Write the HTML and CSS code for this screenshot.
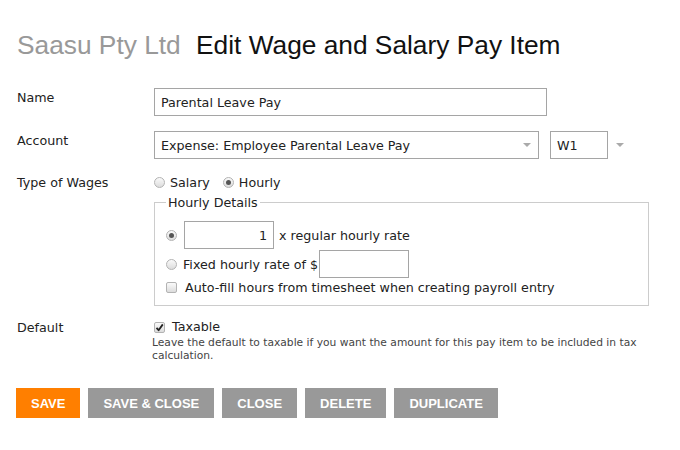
FILE: index.html
```html
<!DOCTYPE html>
<html lang="en">
<head>
    <meta charset="UTF-8">
    <title>Edit Wage and Salary Pay Item</title>
    <link rel="stylesheet" href="styles.css">
</head>
<body>
    <div class="page">
        <h1 class="title"><span class="company">Saasu Pty Ltd</span> Edit Wage and Salary Pay Item</h1>

        <div class="form">
            <div class="row row-name">
                <div class="label">Name</div>
                <div class="field">
                    <div class="input input-name">Parental Leave Pay</div>
                </div>
            </div>

            <div class="row row-account">
                <div class="label">Account</div>
                <div class="field">
                    <div class="select select-account">
                        <span>Expense: Employee Parental Leave Pay</span>
                        <span class="arrow"></span>
                    </div>
                    <div class="input input-code">W1</div>
                    <span class="arrow arrow-out"></span>
                </div>
            </div>

            <div class="row row-type">
                <div class="label">Type of Wages</div>
                <div class="field">
                    <label class="opt"><span class="radio"></span>Salary</label>
                    <label class="opt"><span class="radio checked"></span>Hourly</label>
                </div>
            </div>

            <div class="row row-hourly">
                <div class="label"></div>
                <fieldset class="details">
                    <legend>Hourly Details</legend>
                    <div class="hrow">
                        <span class="radio checked"></span>
                        <div class="input input-rate">1</div>
                        <span class="after">x regular hourly rate</span>
                    </div>
                    <div class="hrow">
                        <span class="radio"></span>
                        <span class="before">Fixed hourly rate of $</span>
                        <div class="input input-fixed"></div>
                    </div>
                    <div class="hrow hrow-check">
                        <span class="checkbox"></span>
                        <span class="before">Auto-fill hours from timesheet when creating payroll entry</span>
                    </div>
                </fieldset>
            </div>

            <div class="row row-default">
                <div class="label">Default</div>
                <div class="field field-col">
                    <label class="opt opt-tax">
                        <span class="checkbox checked">
                            <svg width="9" height="9" viewBox="0 0 9 9"><path d="M1.5 4.8 L3.6 7.2 L7.8 1.4" fill="none" stroke="#222" stroke-width="1.8" stroke-linejoin="round"/></svg>
                        </span>Taxable
                    </label>
                    <p class="help">Leave the default to taxable if you want the amount for this pay item to be included in tax calculation.</p>
                </div>
            </div>
        </div>

        <div class="actions">
            <button class="btn btn-primary">SAVE</button>
            <button class="btn">SAVE &amp; CLOSE</button>
            <button class="btn">CLOSE</button>
            <button class="btn">DELETE</button>
            <button class="btn">DUPLICATE</button>
        </div>
    </div>
</body>
</html>
```

FILE: styles.css
```css
body {
    margin: 0;
    background: #fff;
    color: #222;
    font-family: "DejaVu Sans", Verdana, sans-serif;
    font-size: 12.7px;
}
.page {
    padding: 30px 0 0 17px;
    width: 640px;
}
.title {
    margin: 0;
    font-family: "Liberation Sans", Arial, sans-serif;
    font-weight: normal;
    font-size: 26.3px;
    line-height: 30px;
    color: #111;
}
.company {
    color: #999;
    margin-right: 8px;
}
.form {
    margin-top: 28px;
}
.row {
    display: grid;
    grid-template-columns: 137px 1fr;
    align-items: start;
}
.label {
    padding-top: 2px;
    line-height: 15px;
}
.field {
    display: flex;
    align-items: center;
}
.input,
.select {
    box-sizing: border-box;
    height: 28px;
    border: 1px solid #a5a5a5;
    padding: 0 6px;
    display: flex;
    align-items: center;
    background: #fff;
}
.input-name {
    width: 393px;
}
.row-account {
    margin-top: 15px;
}
.select-account {
    width: 385px;
    justify-content: space-between;
    padding-right: 7px;
}
.input-code {
    width: 58px;
    margin-left: 11px;
}
.arrow {
    width: 0;
    height: 0;
    border-left: 4px solid transparent;
    border-right: 4px solid transparent;
    border-top: 4px solid #aaa;
}
.arrow-out {
    margin-left: 8px;
}
.row-type {
    margin-top: 16px;
}
.row-type .label {
    padding-top: 0;
}
.opt {
    display: flex;
    align-items: center;
    margin-right: 13px;
    line-height: 15px;
}
.radio {
    box-sizing: border-box;
    width: 11px;
    height: 11px;
    border-radius: 50%;
    border: 1px solid #b3b3b3;
    background: linear-gradient(#fafafa, #dcdcdc);
    margin-right: 5px;
    display: inline-flex;
    align-items: center;
    justify-content: center;
    flex: none;
}
.radio.checked::after {
    content: "";
    width: 5px;
    height: 5px;
    border-radius: 50%;
    background: #555;
}
.checkbox {
    box-sizing: border-box;
    width: 11px;
    height: 11px;
    border: 1px solid #b3b3b3;
    border-radius: 2px;
    background: linear-gradient(#fafafa, #dcdcdc);
    display: inline-flex;
    align-items: center;
    justify-content: center;
    flex: none;
}
.checkbox svg {
    display: block;
}
.row-hourly {
    margin-top: 5px;
}
.details {
    box-sizing: border-box;
    width: 495px;
    margin: 0;
    border: 1px solid #ccc;
    padding: 4px 12px 10px 11px;
}
.details legend {
    padding: 0 2px;
    line-height: 15px;
}
.hrow {
    display: flex;
    align-items: center;
    height: 28px;
}
.hrow:first-of-type {
    margin-top: 7px;
}
.hrow + .hrow {
    margin-top: 1px;
}
.hrow .radio {
    margin-right: 7px;
}
.input-rate {
    width: 90px;
    justify-content: flex-end;
}
.input-fixed {
    width: 90px;
    margin-left: 1px;
}
.after {
    margin-left: 5px;
}
.hrow .radio + .before {
    margin-left: -1px;
}
.hrow-check {
    height: 16px;
    margin-top: 2px;
}
.hrow-check .checkbox {
    margin-right: 8px;
}
.row-default {
    margin-top: 13px;
}
.row-default .label {
    padding-top: 1px;
}
.field-col {
    flex-direction: column;
    align-items: flex-start;
}
.opt-tax .checkbox {
    margin-right: 7px;
}
.opt-tax {
    line-height: 16px;
}
.help {
    margin: 1px 0 0 -2px;
    width: 500px;
    font-size: 10.7px;
    line-height: 13px;
    color: #444;
}
.actions {
    display: flex;
    gap: 8px;
    margin-top: 26px;
    margin-left: -1px;
}
.btn {
    height: 30px;
    padding: 0 15px;
    border: none;
    background: #999;
    color: #fff;
    font-family: "Liberation Sans", Arial, sans-serif;
    font-weight: bold;
    font-size: 13px;
    cursor: pointer;
}
.btn-primary {
    background: #ff7f00;
}
```
